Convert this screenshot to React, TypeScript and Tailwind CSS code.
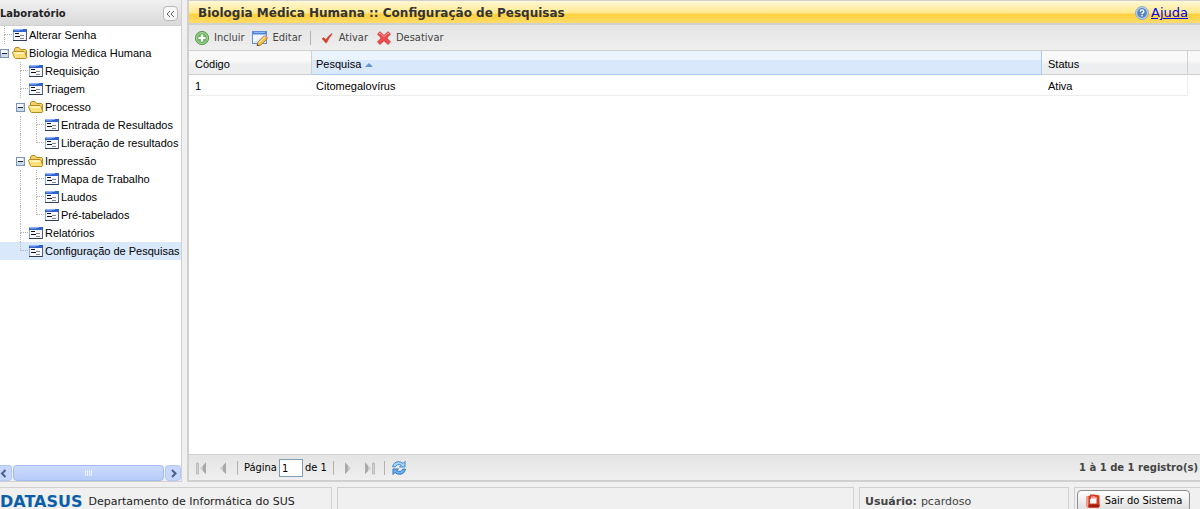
import { useState } from "react";
import type { ReactNode } from "react";
import clsx from "clsx";

type TreeNode = {
  label: string;
  children?: TreeNode[];
};

const TREE: TreeNode[] = [
  { label: "Alterar Senha" },
  {
    label: "Biologia Médica Humana",
    children: [
      { label: "Requisição" },
      { label: "Triagem" },
      { label: "Processo", children: [{ label: "Entrada de Resultados" }, { label: "Liberação de resultados" }] },
      { label: "Impressão", children: [{ label: "Mapa de Trabalho" }, { label: "Laudos" }, { label: "Pré-tabelados" }] },
      { label: "Relatórios" },
      { label: "Configuração de Pesquisas" },
    ],
  },
];

const RECORDS = [{ code: "1", name: "Citomegalovírus", status: "Ativa" }];

// Icons

function FormIcon() {
  return (
    <svg width="16" height="16" viewBox="0 0 16 16" shapeRendering="crispEdges" className="shrink-0">
      <rect x="1" y="2" width="14" height="12" fill="#8ba9da" />
      <rect x="2" y="5" width="12" height="8" fill="#f7f9fc" />
      <rect x="1" y="2" width="14" height="3" fill="#2f62cc" />
      <rect x="1" y="2" width="10" height="1" fill="#8db2f6" />
      <rect x="2" y="3" width="6" height="1" fill="#5f90ea" />
      <path d="M3 6h4v1H3zM3 9h5v1H3z" fill="#111" />
      <path d="M8 8h4v1H8zM8 11h4v1H8z" fill="#85888e" />
      <rect x="1" y="13" width="14" height="1" fill="#2f3d57" />
      <rect x="14" y="5" width="1" height="9" fill="#4e5f80" />
    </svg>
  );
}

function FolderIcon() {
  return (
    <svg width="16" height="16" viewBox="0 0 16 16" className="shrink-0">
      <path d="M2.500 12.500V4L3.500 2.500H7L8.500 4.500H13.500L14.500 5.500V12.500Z" fill="#f3cf68" stroke="#b98a22" />
      <path d="M.5 7.500L1.200 6.500H12L13 7.500L14.800 12.500L14 13.500H3.500L2.500 12.700Z" fill="#fbe07a" stroke="#b98a22" />
      <path d="M1.700 7.300H11.800L12.600 9H2.300Z" fill="#fff5bd" />
    </svg>
  );
}

function MinusBox() {
  return (
    <svg width="9" height="9" viewBox="0 0 9 9" shapeRendering="crispEdges">
      <rect x="0.500" y="0.500" width="8" height="8" fill="#cfd9e8" stroke="#7b95b8" />
      <rect x="1" y="1" width="6" height="3" fill="#f6f9fd" />
      <rect x="2" y="4" width="5" height="1" fill="#14284a" />
    </svg>
  );
}

function AddIcon() {
  return (
    <svg width="16" height="16" viewBox="0 0 16 16">
      <circle cx="8" cy="8" r="6.600" fill="#74b566" stroke="#5c9b50" />
      <circle cx="8" cy="8" r="5.500" fill="none" stroke="#a8d79e" />
      <path d="M8 4.500v7M4.500 8h7" stroke="#fff" strokeWidth="2.200" />
    </svg>
  );
}

function EditIcon() {
  return (
    <svg width="16" height="16" viewBox="0 0 16 16">
      <rect x="0.500" y="1.500" width="14" height="12" fill="#f2f7fe" stroke="#5c8fd8" />
      <path d="M1 2h13v2.500H1z" fill="#4d86dc" />
      <path d="M2 2.500h11" stroke="#8db8f5" />
      <path d="M2 12.500L12 5h2v8H2z" fill="#d5e4f8" />
      <path d="M5.800 12.400L12.300 5.900L15.200 8.800L8.700 15.300L5 16Z" fill="#f3bd3e" stroke="#a8742a" strokeWidth=".8" />
      <path d="M7.200 12.700L13 6.900" stroke="#ffe79a" strokeWidth="1.200" />
      <path d="M5 16L5.500 14L7 15.500Z" fill="#333" />
      <path d="M12.300 5.900L13.200 5L16 7.800L15.200 8.800Z" fill="#e89a83" />
    </svg>
  );
}

function CheckIcon() {
  return (
    <svg width="16" height="16" viewBox="0 0 16 16">
      <path d="M3 8.800L5 7.600L6.800 9.800Q9 6 12.800 3.500L13.200 4Q10 7.600 7.600 12.800H6.400Q5 10.300 3 8.800Z" fill="#d8432c" stroke="#c03a24" strokeWidth=".5" />
    </svg>
  );
}

function CrossIcon() {
  return (
    <svg width="16" height="16" viewBox="0 0 16 16">
      <path d="M1.500 4L4 1.700L8 5.400L12 1.700L14.500 4L10.800 8L14.500 12L12 14.400L8 10.700L4 14.400L1.500 12L5.200 8Z" fill="#ec4b4b" stroke="#d73a3a" strokeWidth=".8" strokeLinejoin="round" />
      <path d="M3 4L4 3L8 6.800L12 3L13 4" fill="none" stroke="#ff9a94" />
    </svg>
  );
}

function HelpIcon() {
  return (
    <svg width="14" height="14" viewBox="0 0 14 14">
      <circle cx="7" cy="7" r="6.400" fill="#c5d8ee" stroke="#86a5cb" />
      <circle cx="7" cy="7" r="4.900" fill="#5786c2" />
      <path d="M5.200 5.600Q5.300 3.900 7 3.900T8.800 5.500Q8.800 6.400 7.800 6.900Q7 7.300 7 8.200" fill="none" stroke="#fff" strokeWidth="1.300" />
      <rect x="6.300" y="9" width="1.400" height="1.400" fill="#fff" />
    </svg>
  );
}

function PageArrow({ flip, bar }: { flip?: boolean; bar?: boolean }) {
  return (
    <svg width="16" height="16" viewBox="0 0 16 16" className={flip ? "-scale-x-100" : ""}>
      {bar && <path d="M3.500 3h2v11h-2z" fill="#cfcfcf" stroke="#a8a8a8" strokeWidth=".6" />}
      <path d={bar ? "M13 2.500V14L7 8.200Z" : "M11 2.500V14L5 8.200Z"} fill="#c9c9c9" />
      <path d={bar ? "M13 2.500V14L10 11V5.500Z" : "M11 2.500V14L8 11V5.500Z"} fill="#a9a9a9" />
    </svg>
  );
}

function RefreshIcon() {
  return (
    <svg width="16" height="16" viewBox="0 0 16 16">
      <path d="M1.500 6.800Q2.800 2 7.200 1.700Q10 1.600 12 3.500L14 1.500V7H8.500L10.200 5.300Q8.500 4 6.500 4.700Q5 5.300 4.300 6.800Z" fill="#a9d5fb" stroke="#2f7cd0" strokeWidth=".9" />
      <path d="M14.500 9.200Q13.200 14 8.800 14.300Q6 14.400 4 12.500L2 14.500V9H7.500L5.800 10.700Q7.500 12 9.500 11.300Q11 10.700 11.700 9.200Z" fill="#6db2f3" stroke="#2468ba" strokeWidth=".9" />
    </svg>
  );
}

function ExitIcon() {
  return (
    <svg width="16" height="16" viewBox="0 0 16 16">
      <path d="M1.500 3.500L5 2.500V1.500H9L14.500 2.500V13.500L13.500 14.500H2.500L1.500 13.500Z" fill="#d63a20" />
      <path d="M1.500 3.500L3.500 3V14.500H2.500L1.500 13.500Z" fill="#f3a28e" />
      <path d="M3.500 11.500H14.500V13.500L13.500 14.500H3.500Z" fill="#a81c0c" />
      <path d="M5 10.500V6.500L6.500 5V3.500H7.500V5.500H8.500V3H9.500V5.500H10.500V4H11.500V10.500Z" fill="#fff" />
    </svg>
  );
}

// Sidebar

function TreeRow({ node, trail, last, selected, onSelect, onToggle }: {
  node: TreeNode;
  trail: boolean[];
  last: boolean;
  selected: boolean;
  onSelect: () => void;
  onToggle: () => void;
}) {
  return (
    <div className={clsx("flex h-[18px] items-center", selected && "bg-[#d9e8fb]")}>
      {trail.map((line, i) => (
        <span key={i} className="flex h-full w-4 shrink-0 pl-2">
          {line && <span className="border-l border-dotted border-[#b5b5b5]" />}
        </span>
      ))}
      <span className="flex h-full w-4 shrink-0 items-center">
        {node.children ? (
          <button type="button" aria-label={`Recolher ${node.label}`} onClick={onToggle} className="flex h-full w-4 items-center justify-center">
            <MinusBox />
          </button>
        ) : (
          <span className="flex h-full w-full flex-col pl-2">
            <span className="h-[9px] border-b border-l border-dotted border-[#b5b5b5]" />
            {!last && <span className="h-[9px] border-l border-dotted border-[#b5b5b5]" />}
          </span>
        )}
      </span>
      <button type="button" onClick={onSelect} className="flex items-center whitespace-nowrap">
        {node.children ? <FolderIcon /> : <FormIcon />}
        <span className="pl-px">{node.label}</span>
      </button>
    </div>
  );
}

function Sidebar() {
  const [selected, setSelected] = useState("Configuração de Pesquisas");
  const [closed, setClosed] = useState<string[]>([]);

  const toggle = (label: string) =>
    setClosed((c) => (c.includes(label) ? c.filter((l) => l !== label) : [...c, label]));

  const renderNodes = (nodes: TreeNode[], trail: boolean[]): ReactNode => (
    <ul>
      {nodes.map((node, i) => {
        const last = i === nodes.length - 1;
        return (
          <li key={node.label}>
            <TreeRow
              node={node}
              trail={trail}
              last={last}
              selected={selected === node.label}
              onSelect={() => setSelected(node.label)}
              onToggle={() => toggle(node.label)}
            />
            {node.children && !closed.includes(node.label) && renderNodes(node.children, [...trail, !last])}
          </li>
        );
      })}
    </ul>
  );

  return (
    <aside className="flex w-[182px] shrink-0 flex-col border-r border-b border-[#d0d0d0] bg-white">
      <div className="flex h-[26px] shrink-0 items-center justify-between border-b border-[#d0d0d0] bg-linear-to-b from-[#f1f1f1] to-[#d9d9d9] pt-0.5 pr-[3px]">
        <h2 className="font-['DejaVu_Sans'] text-[10px] font-bold text-[#222]">Laboratório</h2>
        <button type="button" aria-label="Recolher painel" className="flex size-[15px] items-center justify-center rounded-sm border border-[#b8b8b8] bg-[#f7f7f7]">
          <svg width="9" height="8" viewBox="0 0 9 8" fill="none" stroke="#666">
            <path d="M4 1L1 4L4 7M8 1L5 4L8 7" />
          </svg>
        </button>
      </div>
      <nav className="min-h-0 flex-1 overflow-hidden">
        <div className="-ml-1">{renderNodes(TREE, [])}</div>
      </nav>
      <div className="flex h-4 shrink-0 gap-px bg-[#f3f1ec]">
        <button type="button" aria-label="Rolar para a esquerda" className="flex w-3 items-center rounded-r-sm border-y border-r border-[#b4c8f6] bg-[#c6d6fc]">
          <svg width="7" height="9" viewBox="0 0 7 9" fill="none" stroke="#4d6185" strokeWidth="2">
            <path d="M5.500 1L2 4.500L5.500 8" />
          </svg>
        </button>
        <div className="flex flex-1 items-center justify-center gap-px rounded-sm border border-[#a4bbef] bg-linear-to-b from-[#cddcfd] to-[#b6cbf9]">
          {[0, 1, 2, 3].map((i) => (
            <span key={i} className="h-1.5 w-px bg-[#eef4fe]" />
          ))}
        </div>
        <button type="button" aria-label="Rolar para a direita" className="flex w-4 items-center justify-center rounded-sm border border-[#b4c8f6] bg-[#c6d6fc]">
          <svg width="7" height="9" viewBox="0 0 7 9" fill="none" stroke="#4d6185" strokeWidth="2">
            <path d="M2 1L5.500 4.500L2 8" />
          </svg>
        </button>
      </div>
    </aside>
  );
}

// Main panel

function ToolButton({ icon, children }: { icon: ReactNode; children: ReactNode }) {
  return (
    <button type="button" className="flex items-center gap-1">
      {icon}
      <span className="pt-0.5">{children}</span>
    </button>
  );
}

function Separator() {
  return <span className="h-3.5 w-px bg-[#b5b2a8]" />;
}

function Toolbar() {
  return (
    <div className="flex h-[26px] shrink-0 items-center gap-2 border-b border-[#d0d0d0] bg-linear-to-b from-[#e4e4e4] to-[#efefef] px-[5px] font-['DejaVu_Sans_Condensed'] text-[11px] text-[#444]">
      <ToolButton icon={<AddIcon />}>Incluir</ToolButton>
      <ToolButton icon={<EditIcon />}>Editar</ToolButton>
      <Separator />
      <ToolButton icon={<CheckIcon />}>Ativar</ToolButton>
      <ToolButton icon={<CrossIcon />}>Desativar</ToolButton>
    </div>
  );
}

function ResearchTable() {
  return (
    <table className="w-full table-fixed border-separate border-spacing-0 text-left">
      <colgroup>
        <col className="w-[123px]" />
        <col />
        <col className="w-[146px]" />
        <col className="w-3" />
      </colgroup>
      <thead>
        <tr className="h-6">
          <th className="border-r border-b border-[#d0d0d0] bg-linear-to-b from-[#f9f9f9] from-40% to-[#eceef0] to-60% px-1.5 pt-[3px] font-normal">Código</th>
          <th aria-sort="ascending" className="border-r border-b border-[#aaccf6] bg-linear-to-b from-[#ebf3fd] from-40% to-[#d9e8fb] to-40% px-1 pt-[3px] font-normal">
            <button type="button" className="flex items-center gap-1">
              Pesquisa
              <svg width="8" height="4" viewBox="0 0 8 4" className="mt-0.5">
                <path d="M0 4L4 0L8 4Z" fill="#6593cf" />
              </svg>
            </button>
          </th>
          <th className="border-r border-b border-[#d0d0d0] bg-linear-to-b from-[#f9f9f9] from-40% to-[#eceef0] to-60% px-1.5 pt-[3px] font-normal">Status</th>
          <td className="border-b border-[#d0d0d0] bg-linear-to-b from-[#f9f9f9] from-40% to-[#eceef0] to-60%" />
        </tr>
      </thead>
      <tbody>
        {RECORDS.map((r) => (
          <tr key={r.code} className="h-[21px]">
            <td className="border-b border-[#ededed] px-1.5 pt-0.5">{r.code}</td>
            <td className="border-b border-[#ededed] px-1 pt-0.5">{r.name}</td>
            <td className="border-r border-b border-[#ededed] px-1.5 pt-0.5">{r.status}</td>
            <td />
          </tr>
        ))}
      </tbody>
    </table>
  );
}

function Pager() {
  const [page, setPage] = useState("1");

  return (
    <div className="flex h-[26px] shrink-0 items-center justify-between border-t border-[#d0d0d0] bg-linear-to-b from-[#e4e4e4] to-[#efefef] pr-0.5 pl-1">
      <div className="flex items-center gap-1.5 font-['DejaVu_Sans_Condensed'] text-[11px]">
        <button type="button" aria-label="Primeira página"><PageArrow bar /></button>
        <button type="button" aria-label="Página anterior"><PageArrow /></button>
        <Separator />
        <label className="flex items-center gap-0.5">
          <span className="pt-0.5">Página</span>
          <input
            value={page}
            onChange={(e) => setPage(e.target.value)}
            className="h-[18px] w-6 border border-[#7f9db9] bg-white px-0.5 pt-0.5"
          />
        </label>
        <span className="-ml-1 pt-0.5">de 1</span>
        <Separator />
        <button type="button" aria-label="Próxima página"><PageArrow flip /></button>
        <button type="button" aria-label="Última página"><PageArrow flip bar /></button>
        <Separator />
        <button type="button" aria-label="Atualizar"><RefreshIcon /></button>
      </div>
      <p className="font-['DejaVu_Sans'] text-[10px] font-bold text-[#444]">1 à 1 de 1 registro(s)</p>
    </div>
  );
}

function Footer() {
  return (
    <footer className="flex h-[22px] shrink-0 gap-[5px] font-['DejaVu_Sans'] text-[11px] leading-5 text-[#222]">
      <div className="flex w-[332px] shrink-0 items-center gap-1.5 border-t border-r border-[#d0d0d0] pt-1.5">
        <span className="text-base leading-5 font-bold text-[#0b5fa9]">DATASUS</span>
        <span className="whitespace-nowrap">Departamento de Informática do SUS</span>
      </div>
      <div className="flex-1 border-x border-t border-[#d0d0d0]" />
      <div className="flex w-[210px] shrink-0 items-center gap-1 border-x border-t border-[#d0d0d0] px-[5px] pt-1.5 text-[#444]">
        <b>Usuário:</b>
        <span>pcardoso</span>
      </div>
      <div className="w-[126px] shrink-0 border-t border-l border-[#d0d0d0] pt-0.5 pl-0.5">
        <button type="button" className="flex h-[22px] w-[113px] items-center justify-center gap-1 rounded-sm border border-[#8c8c8c] bg-linear-to-b from-white to-[#dedede] font-['DejaVu_Sans_Condensed'] text-[11px] text-black">
          <ExitIcon />
          Sair do Sistema
        </button>
      </div>
    </footer>
  );
}

export default function App() {
  return (
    <div className="flex h-screen flex-col gap-[5px] overflow-hidden bg-[#f0f0f0] font-['Liberation_Sans',sans-serif] text-[11px] text-black">
      <div className="flex min-h-0 flex-1 gap-[5px]">
        <Sidebar />
        <main className="flex min-w-0 flex-1 flex-col border-b-2 border-l-2 border-[#d0d0d0] bg-white">
          <header className="flex h-[25px] shrink-0 items-center justify-between border-t border-b-2 border-[#d0d0d0] bg-[linear-gradient(#fff8d6,#ffe88c_55%,#ffd03c_60%,#ffdc6a)] pt-0.5 pr-3 pl-[9px] font-['DejaVu_Sans']">
            <h1 className="text-xs font-bold text-[#333]">Biologia Médica Humana :: Configuração de Pesquisas</h1>
            <a href="#ajuda" className="flex items-center gap-0.5 text-[13px] text-[#0000ee]">
              <HelpIcon />
              <span className="underline">Ajuda</span>
            </a>
          </header>
          <Toolbar />
          <div className="min-h-0 flex-1 overflow-hidden">
            <ResearchTable />
          </div>
          <Pager />
        </main>
      </div>
      <Footer />
    </div>
  );
}
